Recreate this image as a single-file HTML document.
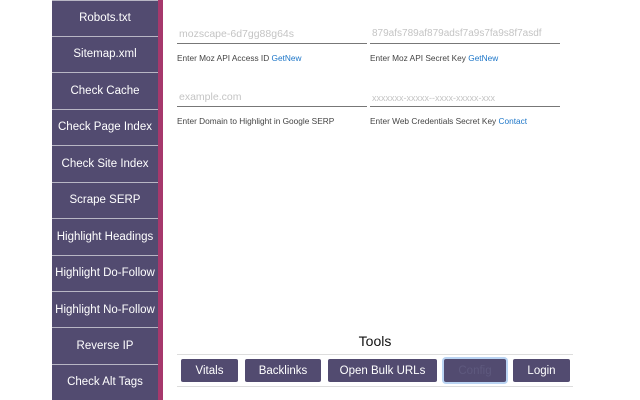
<!DOCTYPE html><html><head><style>
body{margin:0;width:640px;height:400px;background:#fff;font-family:"Liberation Sans",sans-serif;position:relative;overflow:hidden}
.sb{position:absolute;left:52px;top:0;width:106px;height:400px;background:#524b70}
.strip{position:absolute;left:158px;top:0;width:5px;height:400px;background:#a6386c}
.it{position:absolute;left:52px;width:106px;text-align:center;color:#fff;font-size:11.5px;line-height:14px}
.sep{position:absolute;left:52px;width:106px;height:1px;background:#b8b6c4}
.in{position:absolute;border-bottom:1.5px solid #777;height:0}
.ph{position:absolute;font-size:10.5px;color:#c4c4c4}
.lb{position:absolute;font-size:8.3px;color:#444}
.lb a{color:#1d76c8;text-decoration:none}
.btn{position:absolute;top:359px;height:23px;background:#524b70;color:#fff;font-size:11.5px;line-height:24px;text-align:center;border-radius:2px}
</style></head><body>
<div class="sb"></div><div class="strip"></div>
<div class="it" style="top:11px">Robots.txt</div>
<div class="it" style="top:47px">Sitemap.xml</div>
<div class="it" style="top:84px">Check Cache</div>
<div class="it" style="top:120px">Check Page Index</div>
<div class="it" style="top:157px">Check Site Index</div>
<div class="it" style="top:193px">Scrape SERP</div>
<div class="it" style="top:230px">Highlight Headings</div>
<div class="it" style="top:266px">Highlight Do-Follow</div>
<div class="it" style="top:303px">Highlight No-Follow</div>
<div class="it" style="top:339px">Reverse IP</div>
<div class="it" style="top:375px">Check Alt Tags</div>
<div class="sep" style="top:0"></div>
<div class="sep" style="top:36px"></div><div class="sep" style="top:72px"></div><div class="sep" style="top:109px"></div><div class="sep" style="top:145px"></div><div class="sep" style="top:182px"></div><div class="sep" style="top:218px"></div><div class="sep" style="top:255px"></div><div class="sep" style="top:291px"></div><div class="sep" style="top:327px"></div><div class="sep" style="top:364px"></div>
<div class="ph" style="left:179px;top:28px">mozscape-6d7gg88g64s</div>
<div class="in" style="left:177px;top:43px;width:190px"></div>
<div class="lb" style="left:177px;top:53px">Enter Moz API Access ID <a>GetNew</a></div>
<div class="ph" style="left:372px;top:28px;font-size:10px">879afs789af879adsf7a9s7fa9s8f7asdf</div>
<div class="in" style="left:370px;top:43px;width:190px"></div>
<div class="lb" style="left:370px;top:53px">Enter Moz API Secret Key <a>GetNew</a></div>
<div class="ph" style="left:179px;top:91px">example.com</div>
<div class="in" style="left:177px;top:106px;width:190px"></div>
<div class="lb" style="left:177px;top:116px">Enter Domain to Highlight in Google SERP</div>
<div class="ph" style="left:372px;top:93px;font-size:9px">xxxxxxx-xxxxx--xxxx-xxxxx-xxx</div>
<div class="in" style="left:370px;top:106px;width:190px"></div>
<div class="lb" style="left:370px;top:116px">Enter Web Credentials Secret Key <a>Contact</a></div>
<div style="position:absolute;left:177px;width:396px;top:333px;text-align:center;font-size:14px;color:#111">Tools</div>
<div style="position:absolute;left:177px;width:396px;top:354px;height:1px;background:#ddd"></div>
<div style="position:absolute;left:177px;width:396px;top:386px;height:1px;background:#ddd"></div>
<div class="btn" style="left:181px;width:57px">Vitals</div>
<div class="btn" style="left:245px;width:76px">Backlinks</div>
<div class="btn" style="left:328px;width:109px">Open Bulk URLs</div>
<div class="btn" style="left:444px;width:62px;color:#5e597e;box-shadow:0 0 0 2px #b9d3f2">Config</div>
<div class="btn" style="left:513px;width:57px">Login</div>
</body></html>
